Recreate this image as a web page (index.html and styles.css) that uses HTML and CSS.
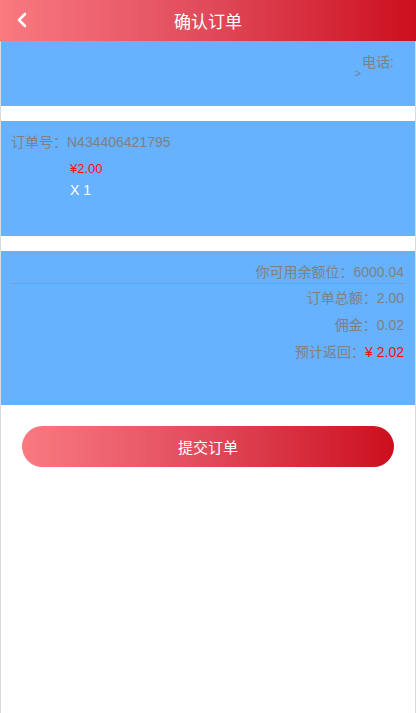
FILE: index.html
```html
<!DOCTYPE html>
<html lang="zh">
<head>
<meta charset="utf-8">
<title>确认订单</title>
<link rel="stylesheet" href="styles.css">
</head>
<body>
<div class="page">
  <header class="topbar">
    <span class="back">
      <svg width="12" height="16" viewBox="0 0 12 16"><path d="M9 2 L3 8 L9 14" fill="none" stroke="#fff" stroke-width="2.6" stroke-linecap="round" stroke-linejoin="round"/></svg>
    </span>
    <h1 class="title">确认订单</h1>
  </header>

  <section class="card addr">
    <div class="addr-inner">
      <span class="arrow">&gt;</span>
      <span class="phone">电话:</span>
    </div>
  </section>

  <section class="card order">
    <div class="order-no">订单号：N434406421795</div>
    <div class="goods">
      <div class="price">¥2.00</div>
      <div class="qty">X 1</div>
    </div>
  </section>

  <section class="card summary">
    <div class="row first">你可用余额位：6000.04</div>
    <div class="row">订单总额：2.00</div>
    <div class="row">佣金：0.02</div>
    <div class="row">预计返回：<span class="red">¥ 2.02</span></div>
  </section>

  <div class="btn-wrap">
    <button class="submit">提交订单</button>
  </div>
</div>
</body>
</html>
```

FILE: styles.css
```css
html, body {
  margin: 0;
  padding: 0;
  background: #fff;
}
body {
  font-family: "Liberation Sans", "Noto Sans CJK SC", sans-serif;
}
.page {
  min-height: 713px;
  border-left: 1px solid #dcdcdc;
  border-right: 1px solid #dcdcdc;
  box-sizing: border-box;
}
.topbar {
  height: 41px;
  margin: 0 -1px;
  background: linear-gradient(to right, #f97a80, #e04a5a 50%, #cc0f1e);
  display: flex;
  align-items: center;
  justify-content: center;
  position: relative;
}
.back {
  position: absolute;
  left: 16px;
  top: 12px;
  width: 12px;
  height: 16px;
}
.back svg { display: block; }
.title {
  margin: 0;
  font-size: 17px;
  font-weight: normal;
  color: #fff;
}
.card {
  background: #66b2ff;
  color: #808080;
  font-size: 14px;
}
.addr {
  height: 65px;
  margin-bottom: 15px;
  display: flex;
  justify-content: flex-end;
}
.addr-inner {
  display: flex;
  align-items: flex-start;
  padding-top: 12px;
  padding-right: 21px;
}
.phone {
  line-height: 18px;
}
.arrow {
  font-size: 11px;
  line-height: 11px;
  margin-top: 15px;
  margin-right: 1px;
}
.order {
  height: 115px;
  margin-bottom: 15px;
  padding: 11px 10px 0;
  box-sizing: border-box;
}
.order-no {
  line-height: 20px;
}
.goods {
  padding-left: 59px;
  padding-top: 7px;
  font-size: 13px;
}
.price {
  color: #ff0a0a;
  line-height: 20px;
}
.qty {
  color: #fff;
  font-size: 14px;
  line-height: 20px;
  margin-top: 1px;
}
.summary {
  height: 154px;
  padding: 11px 11px 0;
  box-sizing: border-box;
}
.row {
  text-align: right;
  line-height: 20px;
  margin-bottom: 7px;
}
.row.first {
  border-bottom: 1px solid #8a9aab;
  padding-bottom: 1px;
  margin-bottom: 4px;
}
.red { color: #ff0a0a; }
.btn-wrap {
  padding: 21px 21px 0;
}
.submit {
  display: block;
  width: 100%;
  height: 41px;
  border: none;
  border-radius: 21px;
  background: linear-gradient(to right, #f97a80, #e04a5a 50%, #cc0f1e);
  color: #fff;
  font-family: "Liberation Sans", "Noto Sans CJK SC", sans-serif;
  font-size: 15px;
  padding: 0;
}
```
